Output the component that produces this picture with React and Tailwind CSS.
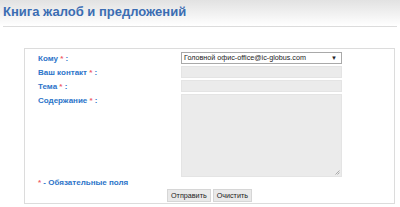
export default function App() {
  const labelCls = "h-[14px] leading-[14px] text-[8px] font-bold text-[#2c74c9]";
  const star = <span className="text-[#f0606a]">*</span>;
  return (
    <div className="w-[400px] h-[207px] bg-white font-['Liberation_Sans',Arial,sans-serif] overflow-hidden">
      <div className="h-[26px] bg-gradient-to-b from-[#e2e2e2] to-white pl-[3px] pt-[3px]">
        <h1 className="text-[13px] leading-[17px] font-bold text-[#3b6db3]">Книга жалоб и предложений</h1>
      </div>
      <div className="mx-[3px] h-px bg-[#dcdcdc]" />
      <div className="ml-[24px] mt-[21px] w-[371px] h-[156px] border border-[#dcdcdc] flex flex-col">
        <div className="flex pt-[3px]">
          <div className="w-[156px] pl-[13px] flex flex-col">
            <div className={labelCls}>Кому {star} :</div>
            <div className={labelCls}>Ваш контакт {star} :</div>
            <div className={labelCls}>Тема {star} :</div>
            <div className={labelCls}>Содержание {star} :</div>
          </div>
          <div className="w-[161px] flex flex-col gap-[2px]">
            <div className="h-[12px] border border-[#a9a9a9] bg-white flex items-center justify-between pl-[2px] pr-[4px] text-[7.2px] text-[#222]">
              <span>Головной офис-office@ic-globus.com</span>
              <span className="text-[6px]">▼</span>
            </div>
            <div className="h-[12px] bg-[#ebebeb] border border-[#e4e4e4]" />
            <div className="h-[12px] bg-[#ebebeb] border border-[#e4e4e4]" />
            <div className="h-[83px] bg-[#ebebeb] border border-[#e4e4e4] relative">
              <svg className="absolute right-[1px] bottom-[1px]" width="5" height="5" viewBox="0 0 5 5">
                <path d="M4.5 0.5 L0.5 4.5 M4.5 2.5 L2.5 4.5" stroke="#999" strokeWidth="0.8" />
              </svg>
            </div>
          </div>
        </div>
        <div className="pl-[13px] h-[12px] leading-[12px] text-[8px] font-bold text-[#2c74c9]">
          {star} - Обязательные поля
        </div>
        <div className="flex justify-center gap-[2px]">
          <button className="h-[13px] px-[3px] bg-[#e9e9e9] border border-[#d6d6d6] text-[7.2px] text-[#222] leading-[11px]">Отправить</button>
          <button className="h-[13px] px-[3px] bg-[#e9e9e9] border border-[#d6d6d6] text-[7.2px] text-[#222] leading-[11px]">Очистить</button>
        </div>
      </div>
    </div>
  );
}
